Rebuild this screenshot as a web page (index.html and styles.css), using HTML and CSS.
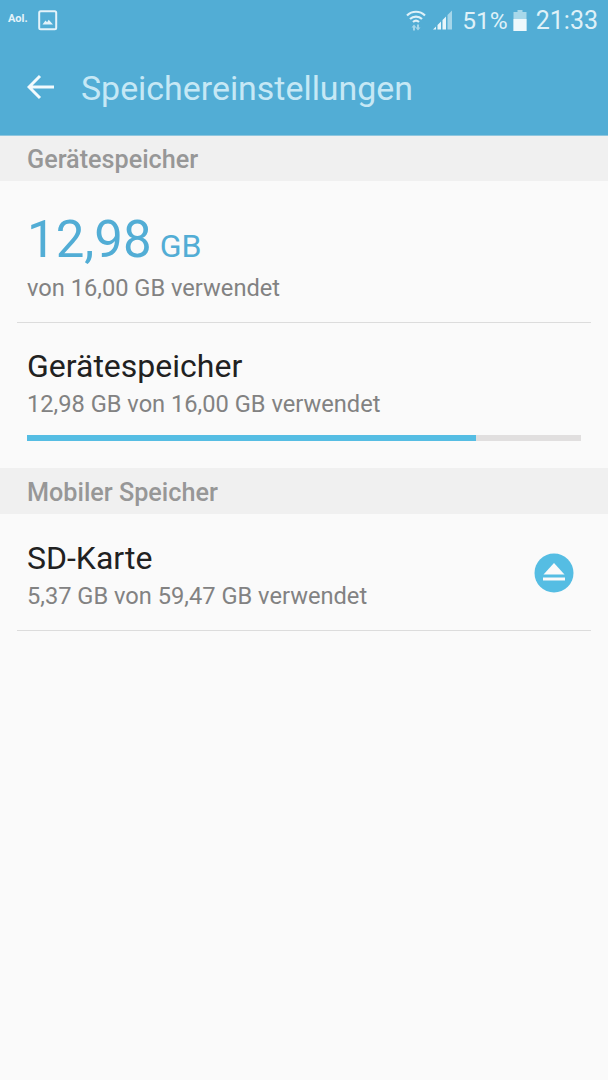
FILE: index.html
```html
<!DOCTYPE html>
<html lang="de">
<head>
<meta charset="utf-8">
<title>Speichereinstellungen</title>
<link rel="stylesheet" href="styles.css">
</head>
<body>
<header class="appbar">
  <div class="status">
    <div class="status-left">
      <span class="aol">Aol.</span>
      <svg class="pic" width="20" height="21" viewBox="0 0 20 21"><rect x="1.200" y="1.200" width="17" height="18" rx="1.500" fill="none" stroke="#e4f3fa" stroke-width="2"/><path d="M4.500 14.500l3-4 1.600 1.800 1.600-2.600 4.300 4.800z" fill="#e4f3fa"/></svg>
    </div>
    <div class="status-right">
      <svg class="wifi" width="20" height="23" viewBox="0 0 20 23"><g fill="none" stroke="#dff1f8" stroke-width="2.200"><path d="M1 6.500c5-5 13-5 18 0"/><path d="M4 10c3.300-3.300 8.700-3.300 12 0"/><path d="M7 13c1.700-1.500 4.300-1.500 6 0"/></g><path d="M8 15.500l-2.500 3h1.500v3h2v-3h1.500zM12 21.500l2.500-3H13v-3h-2v3H9.500z" fill="#a5d6ea"/></svg>
      <svg class="signal" width="20" height="20" viewBox="0 0 20 20"><path d="M0 19.500h3v-3zM4.500 19.500h3.500v-8L4.500 15zM9.500 19.500h3.500V6.500L9.500 10z" fill="#e8f5fa"/><path d="M14.500 19.500H19V.5l-4.500 4.500z" fill="#a5d6ea"/></svg>
      <span class="pct">51%</span>
      <svg class="batt" width="14" height="21" viewBox="0 0 14 21"><path d="M4.500 0h5v2h4v19H.5V2h4z" fill="#a8d8ea"/><rect x=".5" y="9" width="13" height="12" fill="#eef8fc"/></svg>
      <span class="time">21:33</span>
    </div>
  </div>
  <div class="toolbar">
    <svg class="back" width="28" height="26" viewBox="0 0 28 26"><path d="M13 2L2 13l11 11M2 13h25" fill="none" stroke="#f2fafd" stroke-width="3"/></svg>
    <h1 class="title">Speichereinstellungen</h1>
  </div>
</header>

<section class="group-head">Gerätespeicher</section>

<div class="summary">
  <div class="amount"><span class="big">12,98</span> <span class="unit">GB</span></div>
  <div class="sub sub-summary">von 16,00 GB verwendet</div>
</div>
<div class="divider"></div>

<div class="item item-device">
  <div class="item-title">Gerätespeicher</div>
  <div class="sub">12,98 GB von 16,00 GB verwendet</div>
  <div class="bar"><div class="fill"></div></div>
</div>

<section class="group-head group-head-tall">Mobiler Speicher</section>

<div class="item item-sd">
  <div class="item-text">
    <div class="item-title">SD-Karte</div>
    <div class="sub">5,37 GB von 59,47 GB verwendet</div>
  </div>
  <svg class="eject" width="40" height="40" viewBox="0 0 40 40"><circle cx="20" cy="20" r="19.500" fill="#55bde3"/><path d="M20 10l10.500 11.500h-21z" fill="#fafafa"/><rect x="9" y="24.500" width="22" height="3" fill="#fafafa"/></svg>
</div>
<div class="divider"></div>
</body>
</html>
```
FILE: styles.css
```css
* { box-sizing: border-box; }
html, body { margin: 0; padding: 0; }
body {
  width: 608px;
  height: 1080px;
  overflow: hidden;
  background: #fafafa;
  font-family: Roboto, "Liberation Sans", sans-serif;
}
.appbar {
  height: 136px;
  background: #52add5;
  border-bottom: 1px solid #8fc6de;
}
.status {
  height: 40px;
  display: flex;
  justify-content: space-between;
  align-items: center;
  padding: 0 10px 0 8px;
}
.status-left { display: flex; align-items: center; gap: 10px; }
.aol { font-size: 11px; font-weight: 700; color: #e4f3fa; width: 20px; margin-top: -4px; white-space: nowrap; }
.status-right { display: flex; align-items: center; color: #dff1f8; }
.wifi { margin-right: 7px; }
.signal { margin-right: 9px; }
.pct { font-size: 24.500px; margin-right: 5px; }
.batt { margin-right: 9px; }
.time { font-size: 25px; }
.toolbar {
  height: 95px;
  display: flex;
  align-items: center;
  padding: 0 0 0 27px;
  gap: 26px;
}
.back { margin-top: -2px; }
.title { margin: 0; font-size: 33.900px; font-weight: 400; color: #c6e8f5; line-height: 1; margin-top: 2px; }
.group-head {
  height: 45px;
  background: #f0f0f0;
  padding-left: 27px;
  padding-top: 2px;
  display: flex;
  align-items: center;
  font-size: 25.200px;
  font-weight: 500;
  color: #979797;
}
.group-head-tall { height: 46px; }
.summary { height: 141px; padding: 29px 27px 0; }
.amount { color: #52add5; line-height: 60px; height: 60px; white-space: nowrap; }
.big { font-size: 51px; }
.unit { font-size: 32px; margin-left: 4px; }
.sub { font-size: 23.650px; color: #828282; line-height: 28px; }
.sub-summary { margin-top: 4px; }
.divider { height: 1px; margin: 0 17px; background: #dcdcdc; }
.item-title { font-size: 32px; color: #212121; line-height: 38px; }
.item-title + .sub { margin-top: 5px; }
.item-device { height: 145px; padding: 24px 27px 0; }
.bar { height: 6px; margin-top: 17px; background: #e1dfdf; }
.fill { height: 100%; width: 81%; background: #55bde3; }
.item-sd {
  height: 116px;
  padding: 2px 34px 0 27px;
  display: flex;
  align-items: center;
  justify-content: space-between;
}
.item-text { padding-top: 3px; }
```
